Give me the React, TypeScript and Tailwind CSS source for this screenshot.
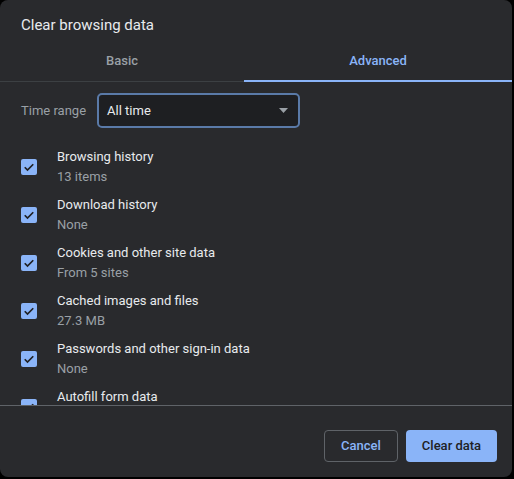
import React from "react";

const items = [
  { title: "Browsing history", sub: "13 items" },
  { title: "Download history", sub: "None" },
  { title: "Cookies and other site data", sub: "From 5 sites" },
  { title: "Cached images and files", sub: "27.3 MB" },
  { title: "Passwords and other sign-in data", sub: "None" },
  { title: "Autofill form data", sub: "None" },
];

function Checkbox() {
  return (
    <div className="w-4 h-4 rounded-[2px] bg-[#8ab4f8] flex items-center justify-center shrink-0">
      <svg width="12" height="12" viewBox="0 0 24 24" fill="none">
        <path d="M3.5 12.5l5.5 5.5L20.5 6.5" stroke="#202124" strokeWidth="3.5" />
      </svg>
    </div>
  );
}

export default function App() {
  return (
    <div
      className="w-[514px] h-[479px] bg-black"
      style={{ fontFamily: "Roboto, 'Liberation Sans', sans-serif" }}
    >
      <div className="w-[512px] h-[477px] bg-[#292a2d] rounded-lg flex flex-col overflow-hidden">
        {/* Title */}
        <div className="pt-[15px] px-[21px] h-[35px] text-[15px] leading-5 text-[#e8eaed]">
          Clear browsing data
        </div>

        {/* Tabs */}
        <div className="mt-[5px] h-[42px] flex border-b border-[#3c4043] relative">
          <div className="w-[244px] flex items-center justify-center text-[13px] font-medium text-[#9aa0a6]">
            Basic
          </div>
          <div className="flex-1 flex items-center justify-center text-[13px] font-medium text-[#8ab4f8] relative">
            Advanced
            <div className="absolute left-0 right-0 -bottom-px h-[2px] bg-[#8ab4f8]" />
          </div>
        </div>

        {/* Time range */}
        <div className="mt-[11px] px-[21px] flex items-center gap-[11px]">
          <span className="text-[13px] text-[#9aa0a6]">Time range</span>
          <div className="w-[203px] h-[35px] rounded-[5px] border-2 border-[#5a7aa8] bg-[#1e1f22] flex items-center justify-between pl-[8px] pr-[10px]">
            <span className="text-[13px] text-[#e8eaed]">All time</span>
            <svg width="9" height="5" viewBox="0 0 9 5">
              <path d="M0 0h9L4.5 5z" fill="#9aa0a6" />
            </svg>
          </div>
        </div>

        {/* List */}
        <div className="h-[277px] overflow-hidden pt-[15px] flex flex-col">
          {items.map((it) => (
            <div key={it.title} className="h-12 shrink-0 flex items-center gap-5 px-[21px]">
              <Checkbox />
              <div className="flex flex-col">
                <span className="text-[13px] leading-5 text-[#e8eaed]">{it.title}</span>
                <span className="text-[13px] leading-5 text-[#9aa0a6]">{it.sub}</span>
              </div>
            </div>
          ))}
        </div>

        {/* Footer */}
        <div className="border-t border-[#5f6368] pt-[24px] pr-[15px] flex justify-end gap-2">
          <button className="w-[74px] h-8 rounded border border-[#5f6368] text-[13px] font-medium text-[#8ab4f8]">
            Cancel
          </button>
          <button className="w-[91px] h-8 rounded bg-[#8ab4f8] text-[13px] font-medium text-[#202124]">
            Clear data
          </button>
        </div>
      </div>
    </div>
  );
}
